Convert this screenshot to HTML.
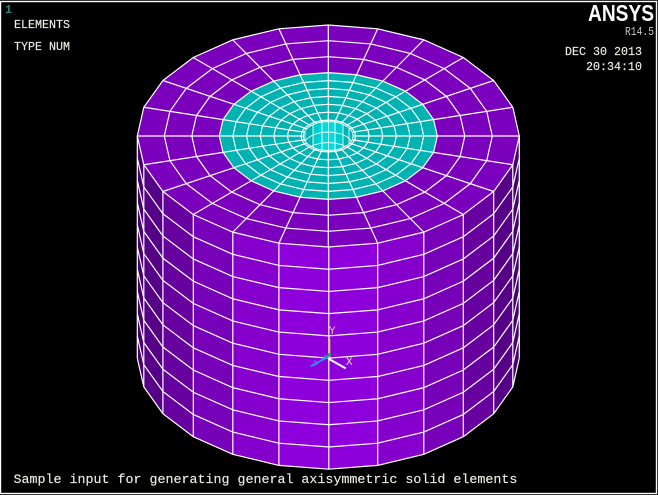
<!DOCTYPE html>
<html lang="en">
<head>
<meta charset="utf-8">
<title>ANSYS Elements</title>
<style>
html,body{margin:0;padding:0;background:#000;width:658px;height:495px;overflow:hidden}
svg{display:block}
.m{font-family:"Liberation Mono",monospace}
.ns{vector-effect:non-scaling-stroke}
</style>
</head>
<body>
<svg width="658" height="495" viewBox="0 0 658 495" xmlns="http://www.w3.org/2000/svg">
<defs>
<polygon id="g" class="ns" points="0,1 .2588,.9659 .5,.866 .7071,.7071 .866,.5 .9659,.2588 1,0 .9659,-.2588 .866,-.5 .7071,-.7071 .5,-.866 .2588,-.9659 0,-1 -.2588,-.9659 -.5,-.866 -.7071,-.7071 -.866,-.5 -.9659,-.2588 -1,0 -.9659,.2588 -.866,.5 -.7071,.7071 -.5,.866 -.2588,.9659"/>
<polyline id="arc" fill="none" stroke="#fff" stroke-width="1.2" points="137.3,136 143.8,164.7 162.9,191.5 193.3,214.5 232.8,232.1 278.9,243.2 328.8,247 377.7,243.2 423.8,232.1 463.3,214.5 493.7,191.5 512.8,164.7 519.3,136"/>
<polyline id="far" fill="none" stroke="#e8ffff" stroke-width=".9" points="303.3,136 304.2,132.2 306.6,128.7 310.6,125.7 315.8,123.4 321.8,122 328.3,121.5 334.8,122 340.8,123.4 346,125.7 350,128.7 352.4,132.2 353.3,136"/>
<clipPath id="hole"><polygon points="328.3,121.5 334.8,122 340.8,123.4 346,125.7 350,128.7 352.4,132.2 353.3,136 352.4,139.8 350,143.3 346,146.3 340.8,148.6 334.8,150 328.3,150.5 321.8,150 315.8,148.6 310.6,146.3 306.6,143.3 304.2,139.8 303.3,136 304.2,132.2 306.6,128.7 310.6,125.7 315.8,123.4 321.8,122"/></clipPath>
</defs>

<rect width="658" height="495" fill="#000"/>

<!-- side facets -->
<polygon fill="#47006f" points="137.3,136 143.8,164.7 143.8,386.9 137.3,358.2"/>
<polygon fill="#560087" points="143.8,164.7 162.9,191.5 162.9,413.7 143.8,386.9"/>
<polygon fill="#66009f" points="162.9,191.5 193.3,214.5 193.3,436.7 162.9,413.7"/>
<polygon fill="#7700b9" points="193.3,214.5 232.8,232.1 232.8,454.3 193.3,436.7"/>
<polygon fill="#8500cd" points="232.8,232.1 278.9,243.2 278.9,465.4 232.8,454.3"/>
<polygon fill="#8e00db" points="278.9,243.2 328.8,247 328.8,469.2 278.9,465.4"/>
<polygon fill="#8e00db" points="328.8,247 377.7,243.2 377.7,465.4 328.8,469.2"/>
<polygon fill="#8500cd" points="377.7,243.2 423.8,232.1 423.8,454.3 377.7,465.4"/>
<polygon fill="#7700b9" points="423.8,232.1 463.3,214.5 463.3,436.7 423.8,454.3"/>
<polygon fill="#66009f" points="463.3,214.5 493.7,191.5 493.7,413.7 463.3,436.7"/>
<polygon fill="#560087" points="493.7,191.5 512.8,164.7 512.8,386.9 493.7,413.7"/>
<polygon fill="#47006f" points="512.8,164.7 519.3,136 519.3,358.2 512.8,386.9"/>

<!-- side mesh -->
<use href="#arc" transform="translate(0,22.22)"/>
<use href="#arc" transform="translate(0,44.44)"/>
<use href="#arc" transform="translate(0,66.66)"/>
<use href="#arc" transform="translate(0,88.88)"/>
<use href="#arc" transform="translate(0,111.1)"/>
<use href="#arc" transform="translate(0,133.32)"/>
<use href="#arc" transform="translate(0,155.54)"/>
<use href="#arc" transform="translate(0,177.76)"/>
<use href="#arc" transform="translate(0,199.98)"/>
<use href="#arc" transform="translate(0,222.2)"/>
<path fill="none" stroke="#fff" stroke-width="1.2" d="M137.3 136V358.2M143.8 164.7V386.9M162.9 191.5V413.7M193.3 214.5V436.7M232.8 232.1V454.3M278.9 243.2V465.4M328.8 247V469.2M377.7 243.2V465.4M423.8 232.1V454.3M463.3 214.5V436.7M493.7 191.5V413.7M512.8 164.7V386.9M519.3 136V358.2"/>

<!-- top surface -->
<g stroke="#fff" stroke-width="1.2" fill="none">
<use href="#g" fill="#7a00bd" transform="translate(328.3,136) scale(191,111)"/>
<use href="#g" transform="translate(328.3,136) scale(164,95.3)"/>
<use href="#g" transform="translate(328.3,136) scale(136.5,79.3)"/>
<use href="#g" fill="#00b2b2" transform="translate(328.3,136) scale(109,63.4)"/>
<use href="#g" transform="translate(328.3,136) scale(95.4,55.4)"/>
<use href="#g" transform="translate(328.3,136) scale(81.8,47.5)"/>
<use href="#g" transform="translate(328.3,136) scale(68.1,39.6)"/>
<use href="#g" transform="translate(328.3,136) scale(54.5,31.7)"/>
<use href="#g" transform="translate(328.3,136) scale(40.9,23.8)"/>
<use href="#g" transform="translate(328.3,136) scale(27.3,15.9)"/>
<path class="ns" transform="translate(328.3,136) scale(191,111)" d="M-1 0L1 0M-.9659 -.2588L.9659 .2588M-.866 -.5L.866 .5M-.7071 -.7071L.7071 .7071M-.5 -.866L.5 .866M-.2588 -.9659L.2588 .9659M0 -1L0 1M.2588 -.9659L-.2588 .9659M.5 -.866L-.5 .866M.7071 -.7071L-.7071 .7071M.866 -.5L-.866 .5M.9659 -.2588L-.9659 .2588"/>
</g>

<!-- hole inner wall -->
<g clip-path="url(#hole)">
<rect x="303" y="120" width="51" height="32" fill="#00b2b2"/>
<rect x="313" y="120" width="30" height="32" fill="#00cccc"/>
<rect x="321" y="120" width="15" height="32" fill="#00dcdc"/>
<path fill="none" stroke="#e8ffff" stroke-width=".9" d="M305 120V152M313 120V152M322 120V152M328.5 120V152M335 120V152M343 120V152M349 120V152M353 120V152"/>
<use href="#far" transform="translate(0,10.5)"/>
<use href="#far" transform="translate(0,21)"/>
</g>
<use href="#g" fill="none" stroke="#fff" stroke-width=".9" transform="translate(328.3,136) scale(25,14.5)"/>

<!-- triad -->
<g fill="none" stroke-linecap="round">
<path d="M329.3 357L329.3 339" stroke="#e8c860" stroke-width="2"/>
<path d="M329 359L345 368" stroke="#fff" stroke-width="2"/>
<path d="M328 357L311 366" stroke="#2e90f0" stroke-width="1.6"/>
<path d="M314 361L318 363L313 366M325 356L322 359" stroke="#2e90f0" stroke-width="1"/>
<path d="M326 357L330 354" stroke="#1e9a70" stroke-width="2.5"/>
</g>
<text class="m" x="329" y="334" font-size="11" fill="#e6cc90">Y</text>
<text class="m" x="346" y="365" font-size="11" fill="#f0d8f0">X</text>

<!-- labels -->
<text class="m" x="5" y="13" font-size="11.7" font-weight="bold" fill="#2a8a80">1</text>
<g class="m" fill="#ecece4" stroke="#ecece4" stroke-width=".15">
<text x="14" y="28" font-size="11.67">ELEMENTS</text>
<text x="14" y="50" font-size="11.67">TYPE NUM</text>
<text x="565" y="55" font-size="11.67">DEC 30 2013</text>
<text x="586" y="70" font-size="11.67">20:34:10</text>
<text x="13.5" y="483" font-size="13.33">Sample input for generating general axisymmetric solid elements</text>
</g>
<text class="m" x="625" y="35" font-size="11.5" fill="#c8c8c8" textLength="29" lengthAdjust="spacingAndGlyphs">R14.5</text>
<text x="588" y="21" font-family="'Liberation Sans',sans-serif" font-weight="bold" font-size="23" fill="#fff" textLength="66" lengthAdjust="spacingAndGlyphs">ANSYS</text>

<!-- frame -->
<rect x="0.5" y="1.5" width="656" height="492" fill="none" stroke="#fff" stroke-width="1.4"/>
</svg>
</body>
</html>
